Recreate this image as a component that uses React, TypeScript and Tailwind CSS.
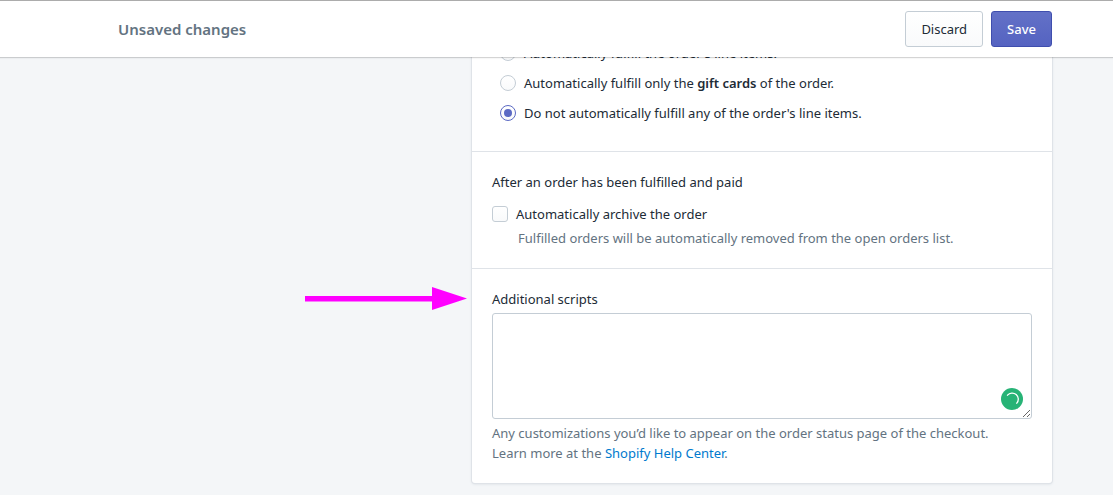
import { useState } from 'react';

const FULFILLMENT_OPTIONS = [
  { value: 'all', label: <>Automatically fulfill the order's line items.</> },
  {
    value: 'gift-cards',
    label: (
      <>
        Automatically fulfill only the <span className="font-semibold">gift cards</span> of the order.
      </>
    ),
  },
  { value: 'none', label: <>Do not automatically fulfill any of the order's line items.</> },
];

function SaveBar() {
  return (
    <header className="sticky top-0 z-10 flex items-center justify-between border-t border-[#acacac] bg-white py-[10px] pr-[61px] pl-[118px] shadow-[0_1px_0_rgba(0,0,0,0.14),0_2px_1px_rgba(0,0,0,0.03)]">
      <h1 className="text-[15px] leading-5 font-semibold text-[#637381]">Unsaved changes</h1>
      <div className="flex gap-2">
        <button
          type="button"
          className="h-9 rounded-[3px] border border-[#c4cdd5] bg-linear-to-b from-white to-[#f9fafb] px-[15px] text-[13px] text-[#212b36]"
        >
          Discard
        </button>
        <button
          type="button"
          className="h-9 rounded-[3px] border border-[#3f4eae] bg-linear-to-b from-[#6371c7] to-[#5563c1] px-[15px] text-[13px] font-medium text-white"
        >
          Save
        </button>
      </div>
    </header>
  );
}

function PointerArrow() {
  return (
    <svg
      className="absolute top-[18px] right-full mr-[5px] h-6 w-[163px]"
      viewBox="0 0 163 24"
      fill="#ff00ff"
      aria-hidden="true"
    >
      <path d="M1 9H128V0L163 11.500L128 23V14.500H1Z" />
    </svg>
  );
}

export default function App() {
  const [fulfillment, setFulfillment] = useState('none');
  const [archive, setArchive] = useState(false);
  const [scripts, setScripts] = useState('');

  return (
    <div className="min-h-screen bg-[#f4f6f8] font-['Noto_Sans',sans-serif] text-[13px] leading-5 text-[#212b36]">
      <SaveBar />

      <main className="grid grid-cols-[354fr_580fr] pr-[61px] pb-3 pl-[118px]">
        <div className="col-start-2 -mt-[34px] rounded-[3px] bg-white shadow-[0_0_0_1px_#dfe3e8,0_1px_3px_#d3d9df]">
          <section className="flex flex-col gap-[10px] px-7 pt-5 pb-7">
            {FULFILLMENT_OPTIONS.map((option) => (
              <label key={option.value} className="flex items-center gap-2">
                <input
                  type="radio"
                  name="fulfillment"
                  value={option.value}
                  checked={fulfillment === option.value}
                  onChange={() => setFulfillment(option.value)}
                  className="grid size-4 shrink-0 appearance-none place-items-center rounded-full border border-[#c4cdd5] bg-linear-to-b from-white to-[#f9fafb] before:size-2 before:rounded-full checked:border-[#5c6ac4] checked:before:bg-[#5c6ac4]"
                />
                <span>{option.label}</span>
              </label>
            ))}
          </section>

          <section className="border-t border-[#dfe3e8] p-5">
            <h2>After an order has been fulfilled and paid</h2>
            <label className="mt-3 flex items-center gap-2">
              <input
                type="checkbox"
                checked={archive}
                onChange={(e) => setArchive(e.target.checked)}
                aria-describedby="archive-help"
                className="size-4 shrink-0 appearance-none rounded-[3px] border border-[#c4cdd5] bg-linear-to-b from-white to-[#f9fafb] checked:border-[#5c6ac4] checked:bg-[#5c6ac4] checked:from-[#5c6ac4] checked:to-[#5c6ac4]"
              />
              <span>Automatically archive the order</span>
            </label>
            <p id="archive-help" className="mt-1 pl-[26px] text-[#637381]">
              Fulfilled orders will be automatically removed from the open orders list.
            </p>
          </section>

          <section className="relative border-t border-[#dfe3e8] p-5">
            <PointerArrow />
            <label htmlFor="scripts">Additional scripts</label>
            <div className="relative mt-1">
              <textarea
                id="scripts"
                value={scripts}
                onChange={(e) => setScripts(e.target.value)}
                className="block h-[106px] w-full resize-y rounded-[3px] border border-[#c4cdd5] bg-white px-3 py-2"
              />
              <svg className="absolute right-2 bottom-2 size-6" viewBox="0 0 24 24" fill="none" aria-hidden="true">
                <circle cx="12" cy="12" r="11" fill="#27b376" />
                <path d="M7.500 8.200A6 6 0 1 1 16.800 16.200" stroke="white" strokeWidth="1.300" strokeLinecap="round" />
              </svg>
            </div>
            <p className="mt-1 text-[#637381]">
              Any customizations you’d like to appear on the order status page of the checkout.
              <br />
              Learn more at the{' '}
              <a href="#help" className="text-[#007ace]">
                Shopify Help Center
              </a>
              .
            </p>
          </section>
        </div>
      </main>
    </div>
  );
}
